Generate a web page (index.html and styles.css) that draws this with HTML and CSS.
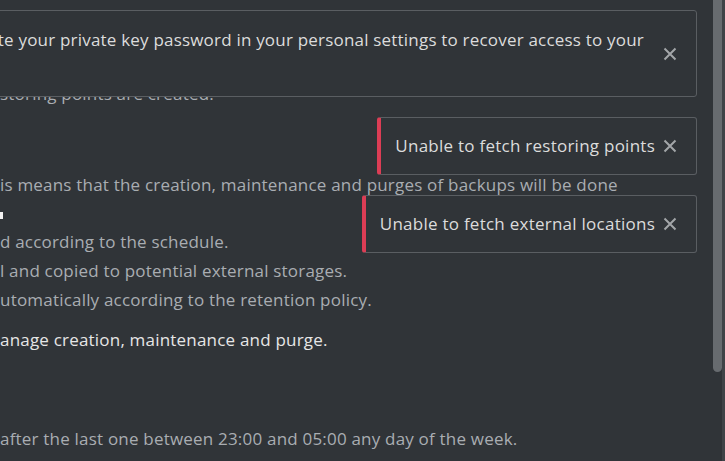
FILE: index.html
```html
<!DOCTYPE html>
<html lang="en">
<head>
<meta charset="utf-8">
<title>Backup settings</title>
<link rel="stylesheet" href="styles.css">
</head>
<body>
<div class="page">
  <main class="content">
    <p class="line line-first">storing points are created.</p>
    <p class="line line-intro">is means that the creation, maintenance and purges of backups will be done</p>
    <div class="marker-row"><span class="marker"></span></div>
    <ul class="list">
      <li>d according to the schedule.</li>
      <li>l and copied to potential external storages.</li>
      <li>utomatically according to the retention policy.</li>
    </ul>
    <p class="line line-strong">anage creation, maintenance and purge.</p>
    <p class="line line-schedule">after the last one between 23:00 and 05:00 any day of the week.</p>
    <p class="line">will be uploaded to the external storages, and the oldest restoring points purged.</p>
  </main>

  <div class="toasts">
    <div class="toast toast-big">
      <span class="toast-text">Invalid private key for encryption app. Please update your private key password in your personal settings to recover access to your<br>encrypted files.</span>
      <button class="toast-close" aria-label="Close">
        <svg viewBox="0 0 14 14" width="14" height="14"><path d="M1.5 1.5 L12.5 12.5 M12.5 1.5 L1.5 12.5"/></svg>
      </button>
    </div>
    <div class="toast toast-error">
      <span class="toast-text">Unable to fetch restoring points</span>
      <button class="toast-close" aria-label="Close">
        <svg viewBox="0 0 14 14" width="14" height="14"><path d="M1.5 1.5 L12.5 12.5 M12.5 1.5 L1.5 12.5"/></svg>
      </button>
    </div>
    <div class="toast toast-error">
      <span class="toast-text">Unable to fetch external locations</span>
      <button class="toast-close" aria-label="Close">
        <svg viewBox="0 0 14 14" width="14" height="14"><path d="M1.5 1.5 L12.5 12.5 M12.5 1.5 L1.5 12.5"/></svg>
      </button>
    </div>
  </div>

  <div class="scrollbar"><div class="scrollbar-thumb"></div></div>
</div>
</body>
</html>
```

FILE: styles.css
```css
* { box-sizing: border-box; }

html, body {
  margin: 0;
  padding: 0;
  height: 100%;
  background: #303438;
  overflow: hidden;
}

body {
  font-family: "Open Sans", "Noto Sans", sans-serif;
  font-size: 17px;
  letter-spacing: 0.2px;
  color: #a9adb2;
}

.page {
  position: relative;
  width: 725px;
  height: 461px;
  overflow: hidden;
}

.content {
  padding-top: 80px;
}

.line {
  margin: 0;
  line-height: 28px;
  white-space: nowrap;
}

.line-intro { margin-top: 63px; }

.marker-row {
  height: 28px;
  display: flex;
  align-items: center;
  padding-top: 4px;
}

.marker {
  display: block;
  width: 3px;
  height: 7px;
  background: #f2f2f2;
}

.list {
  list-style: none;
  margin: 0;
  padding: 0;
}

.list li {
  line-height: 29px;
  white-space: nowrap;
}

.line-strong {
  color: #e6e6e6;
  margin-top: 12px;
}

.line-schedule { margin-top: 71px; }

.toasts {
  position: absolute;
  top: 10px;
  right: 28px;
  display: flex;
  flex-direction: column;
  align-items: flex-end;
  gap: 20px;
}

.toast {
  display: flex;
  align-items: center;
  background: #303438;
  border: 1px solid #5a5e62;
  border-radius: 3px;
  color: #dcdcdc;
  white-space: nowrap;
  letter-spacing: 0.25px;
}

.toast-big {
  height: 87px;
  padding: 0 19px 0 14px;
  letter-spacing: 0.2px;
}

.toast-big .toast-text {
  line-height: 27px;
  padding-bottom: 2px;
}

.toast-big .toast-close {
  margin-left: 19px;
}

.toast-error {
  height: 58px;
  border-left: 4px solid #dc3d55;
  padding: 0 19px 0 14px;
}

.toast-text {
  line-height: 22px;
}

.toast-close {
  margin-left: 8px;
  padding: 0;
  border: 0;
  background: none;
  width: 14px;
  height: 14px;
  display: flex;
  flex-shrink: 0;
}

.toast-close svg path {
  stroke: #a2a5a8;
  stroke-width: 2;
  fill: none;
}

.scrollbar {
  position: absolute;
  top: 0;
  right: 0;
  width: 12px;
  height: 461px;
  background: #303438;
}

.scrollbar::after {
  content: "";
  position: absolute;
  top: 0;
  right: 0;
  width: 3px;
  height: 100%;
  background: #3f4347;
}

.scrollbar-thumb {
  width: 9px;
  height: 372px;
  background: #676b6f;
  border-radius: 0 0 5px 5px;
}
```
